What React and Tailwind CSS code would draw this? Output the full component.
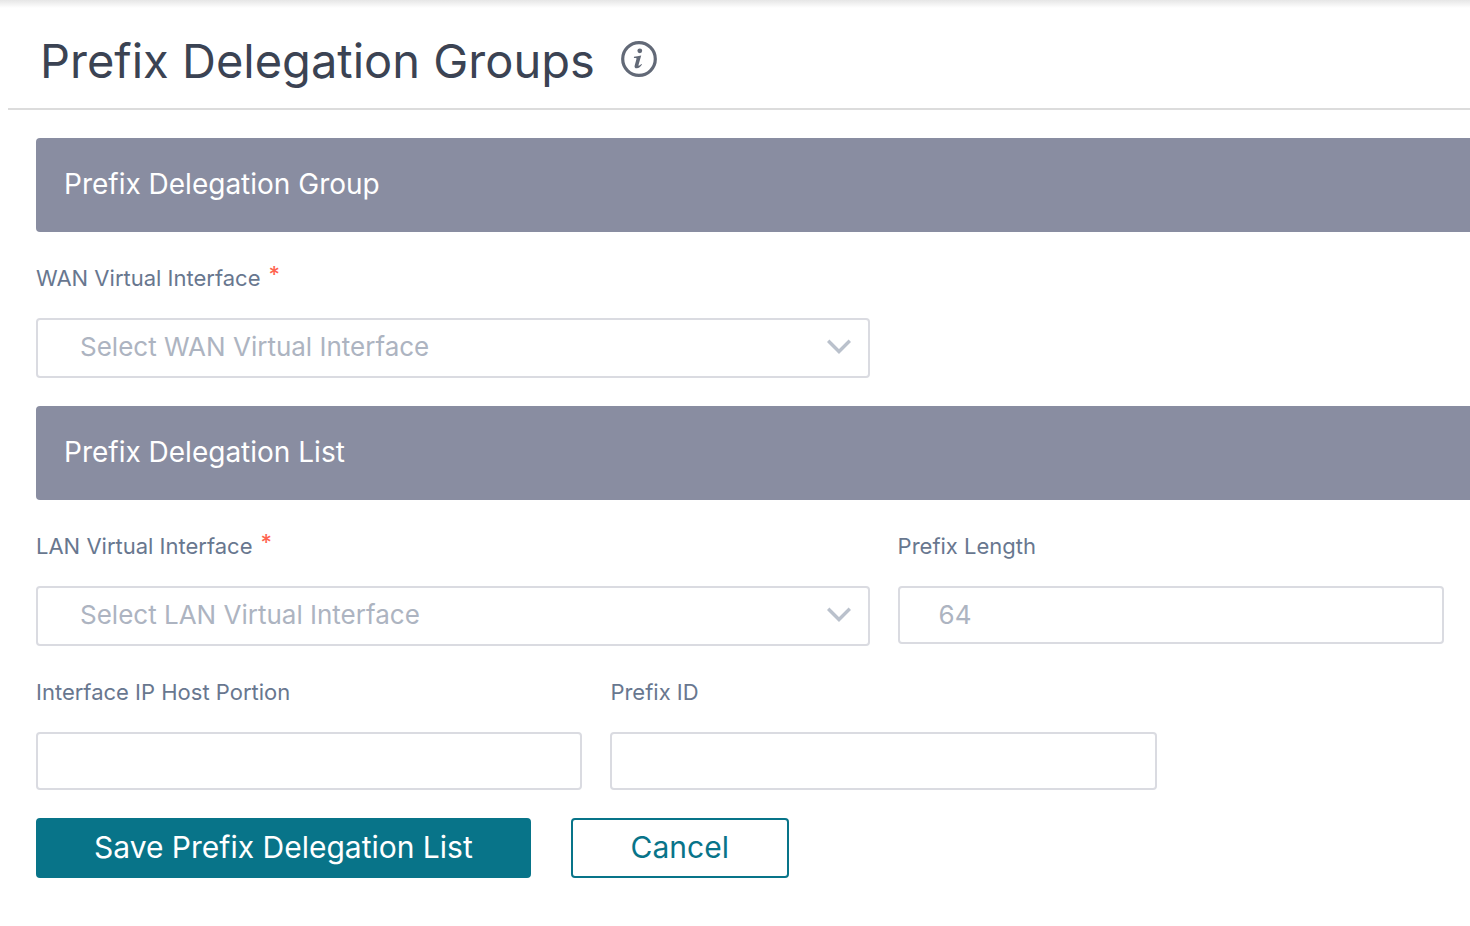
import { useState } from "react";

function SectionBar({ children }) {
  return (
    <h2 className="rounded-l bg-[#898da1] px-7 pt-[27px] pb-[29px] text-[28px] leading-[38px] text-white">
      {children}
    </h2>
  );
}

function Field({ id, label, required, className, children }) {
  return (
    <div className={className}>
      <label htmlFor={id} className="mb-[22px] flex gap-2 text-[22px] leading-9 text-[#68778f]">
        <span>{label}</span>
        {required && <span className="leading-7 font-medium text-[#ff6450]">*</span>}
      </label>
      {children}
    </div>
  );
}

function SelectBox({ id, placeholder }) {
  return (
    <div className="relative">
      <select
        id={id}
        defaultValue=""
        className="block h-[60px] w-full appearance-none rounded border-2 border-[#dadbe1] bg-white pr-16 pb-1 pl-[42px] text-[26px] text-[#adb4c1]"
      >
        <option value="">{placeholder}</option>
      </select>
      <svg
        aria-hidden="true"
        viewBox="0 0 24 16"
        className="pointer-events-none absolute top-[21px] right-[19px] h-4 w-6"
        fill="none"
        stroke="#bac1cc"
        strokeWidth="3.4"
      >
        <path d="M1.2 1.8 12 12.5 22.8 1.8" />
      </svg>
    </div>
  );
}

function TextBox({ id, placeholder, value, onChange }) {
  return (
    <input
      id={id}
      type="text"
      placeholder={placeholder}
      value={value}
      onChange={(e) => onChange(e.target.value)}
      className="block h-[58px] w-full rounded border-2 border-[#dadbe1] bg-white px-[39px] pb-0.5 text-[26px] text-[#3b4353] placeholder:text-[#adb4c1]"
    />
  );
}

function InfoIcon() {
  return (
    <svg aria-hidden="true" viewBox="0 0 36 36" className="h-9 w-9" fill="none">
      <circle cx="18" cy="18" r="16.3" stroke="#626977" strokeWidth="3.2" />
      <circle cx="18.8" cy="9.8" r="2.4" fill="#626977" />
      <path
        d="M13 15.800c2.200-.2 4.600-.8 7.200-1.300l-2.700 9.500c-.2.8.2 1 .8.600.7-.4 1.300-1 1.900-1.700l.8.700c-1.500 2.400-3.200 3.700-5.200 3.700-1.900 0-2.600-1.100-2.100-2.900l1.700-6.200c.2-.8 0-1.100-.8-1.100l-1.700-.1z"
        fill="#626977"
      />
    </svg>
  );
}

export default function App() {
  const [length, setLength] = useState("");
  const [host, setHost] = useState("");
  const [prefixId, setPrefixId] = useState("");

  return (
    <main className="min-h-screen bg-white font-['Inter','Liberation_Sans',sans-serif]">
      <div className="h-2 bg-linear-to-b from-[#e6e6e6] to-white" />
      <header className="ml-2 flex items-center gap-[26px] border-b-2 border-[#dcdcdc] px-8 pt-[23px] pb-[17px]">
        <h1 className="text-[47px] leading-[60px] text-[#3b4353]">Prefix Delegation Groups</h1>
        <button type="button" aria-label="More information" className="mb-1">
          <InfoIcon />
        </button>
      </header>

      <form className="flex flex-col gap-7 py-7 pl-9" onSubmit={(e) => e.preventDefault()}>
        <SectionBar>Prefix Delegation Group</SectionBar>
        <div className="grid grid-cols-5 gap-7 pr-[26px]">
          <Field id="wan" label="WAN Virtual Interface" required className="col-span-3">
            <SelectBox id="wan" placeholder="Select WAN Virtual Interface" />
          </Field>
        </div>

        <SectionBar>Prefix Delegation List</SectionBar>
        <div className="grid grid-cols-5 items-start gap-7 pr-[26px]">
          <Field id="lan" label="LAN Virtual Interface" required className="col-span-3">
            <SelectBox id="lan" placeholder="Select LAN Virtual Interface" />
          </Field>
          <Field id="length" label="Prefix Length" className="col-span-2">
            <TextBox id="length" placeholder="64" value={length} onChange={setLength} />
          </Field>
          <Field id="host" label="Interface IP Host Portion" className="col-span-2">
            <TextBox id="host" value={host} onChange={setHost} />
          </Field>
          <Field id="prefix-id" label="Prefix ID" className="col-span-2">
            <TextBox id="prefix-id" value={prefixId} onChange={setPrefixId} />
          </Field>
        </div>

        <div className="flex gap-10">
          <button
            type="submit"
            className="h-[60px] rounded border-2 border-[#087489] bg-[#087489] px-14 pb-0.5 text-[30px] leading-9 text-white"
          >
            Save Prefix Delegation List
          </button>
          <button
            type="button"
            className="h-[60px] min-w-[218px] rounded border-2 border-[#087489] bg-white px-14 pb-0.5 text-[30px] leading-9 text-[#087489]"
          >
            Cancel
          </button>
        </div>
      </form>
    </main>
  );
}
